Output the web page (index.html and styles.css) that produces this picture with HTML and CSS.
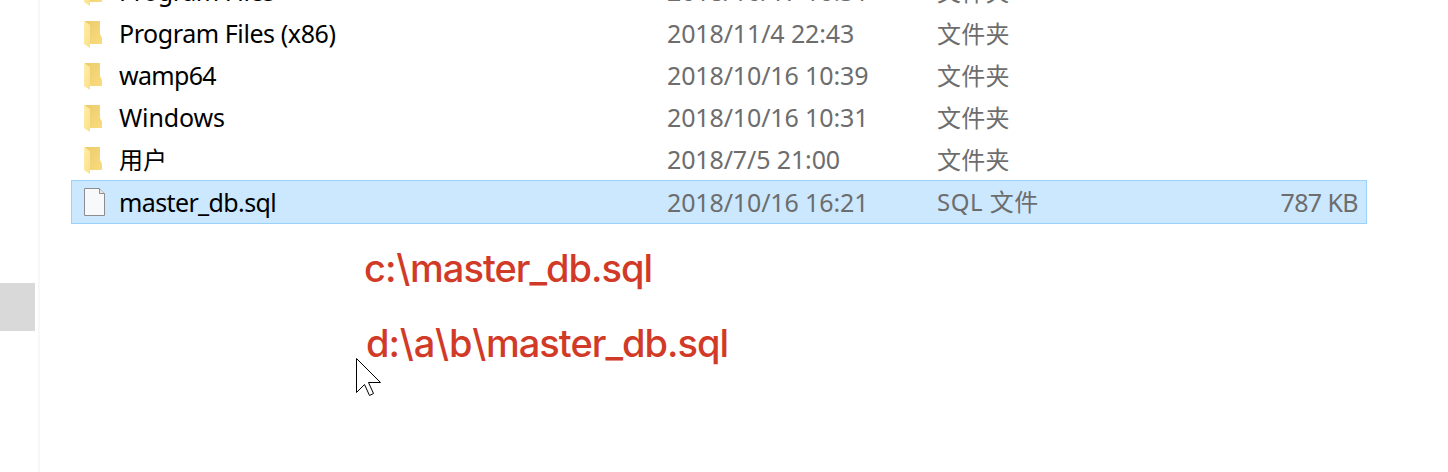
FILE: index.html
```html
<!DOCTYPE html>
<html lang="zh-CN">
<head>
<meta charset="utf-8">
<title>File Explorer</title>
<link rel="stylesheet" href="styles.css">
</head>
<body>
<svg class="symbols" width="0" height="0">
  <defs>
    <linearGradient id="front" x1="0" y1="0" x2="1" y2="1"><stop offset="0" stop-color="#ffedaa"/><stop offset="1" stop-color="#fbe08a"/></linearGradient>
    <linearGradient id="back" x1="0" y1="0" x2="1" y2="1"><stop offset="0" stop-color="#eccb6c"/><stop offset="1" stop-color="#f9dc7e"/></linearGradient>
    <symbol id="folder" viewBox="0 0 20 28">
      <path d="M1 1H16V14L18 18V24H5Z" fill="url(#back)"/>
      <path d="M0 1L6 5V28L0 24Z" fill="url(#front)"/>
    </symbol>
  </defs>
</svg>
<div class="explorer">
  <div class="nav"><div class="nav-item"></div></div>
  <main class="pane">
    <div class="list">
      <div class="row"><svg class="icon"><use href="#folder"/></svg><span class="name program">Program Files</span><span class="date">2018/10/17 10:31</span><span class="type">文件夹</span><span class="size"></span></div>
      <div class="row"><svg class="icon"><use href="#folder"/></svg><span class="name program">Program Files (x86)</span><span class="date">2018/11/4 22:43</span><span class="type">文件夹</span><span class="size"></span></div>
      <div class="row"><svg class="icon"><use href="#folder"/></svg><span class="name wamp">wamp64</span><span class="date">2018/10/16 10:39</span><span class="type">文件夹</span><span class="size"></span></div>
      <div class="row"><svg class="icon"><use href="#folder"/></svg><span class="name">Windows</span><span class="date">2018/10/16 10:31</span><span class="type">文件夹</span><span class="size"></span></div>
      <div class="row"><svg class="icon"><use href="#folder"/></svg><span class="name users">用户</span><span class="date">2018/7/5 21:00</span><span class="type">文件夹</span><span class="size"></span></div>
      <div class="row selected"><svg class="icon file" viewBox="0 0 22 28"><path d="M.5.5H15.5L20.5 5.5V27.5H.5Z" fill="#f8f9fa" stroke="#8b8d90"/><path d="M15.5.5V5.5H20.5" fill="#e4e6e8" stroke="#8b8d90"/></svg><span class="name database">master_db.sql</span><span class="date">2018/10/16 16:21</span><span class="type sql">SQL 文件</span><span class="size">787 KB</span></div>
    </div>
    <div class="notes">
      <p class="note first">c:<span class="slash">\</span>master_db.sql</p>
      <p class="note second">d:<span class="slash">\</span>a<span class="slash">\</span>b<span class="slash">\</span>master_db.sql</p>
    </div>
  </main>
  <svg class="cursor" width="26" height="40" viewBox="0 0 26 40"><path d="M.5.5V34.5L8.500 26.500L13.500 37.500L17.500 35.500L12.500 24.500H24.500Z" fill="#fff" stroke="#000"/></svg>
</div>
</body>
</html>
```
FILE: styles.css
```css
body { margin: 0; background: #fff; overflow: hidden; }
.symbols { position: absolute; }
.explorer { display: flex; position: relative; height: 472px; overflow: hidden; font-family: "Noto Sans", "Noto Sans CJK SC", sans-serif; font-size: 25px; }
.nav { width: 38px; border-right: 2px solid #f7f7f7; padding-top: 283px; box-sizing: content-box; height: 189px; }
.nav-item { width: 35px; height: 48px; background: #d9d9d9; }
.pane { width: 1296px; margin-left: 31px; }
.list { margin-top: -30px; }
.row { display: grid; grid-template-columns: 35px 548px 270px 250px 171px; box-sizing: border-box; height: 42px; padding-left: 13px; padding-top: 1px; align-items: center; line-height: 41px; white-space: nowrap; color: #6d6d6d; }
.row.selected { height: 44px; background: #cce8ff; border: 1px solid #99d1ff; padding: 0 0 2px 12px; line-height: 40px; }
.icon { width: 20px; height: 28px; }
.file { width: 22px; }
.name { color: #000; letter-spacing: -.15px; }
.program { letter-spacing: -.42px; }
.wamp { letter-spacing: -.7px; }
.database { letter-spacing: -.62px; }
.users { font-size: 24px; letter-spacing: 0; }
.date { letter-spacing: -.13px; }
.type { font-size: 24px; letter-spacing: .2px; }
.sql { letter-spacing: .5px; padding-top: 1px; }
.size { text-align: right; letter-spacing: -.6px; }
.notes { padding-left: 293px; color: #d23a28; font-family: Inter, sans-serif; font-size: 38px; font-weight: 500; letter-spacing: -1px; }
.note { margin: 0; line-height: 46px; white-space: nowrap; }
.slash { padding: 0 .8px; }
.first { padding-top: 21px; }
.second { padding: 29px 0 0 2px; }
.cursor { position: absolute; left: 356px; top: 358px; }
```
